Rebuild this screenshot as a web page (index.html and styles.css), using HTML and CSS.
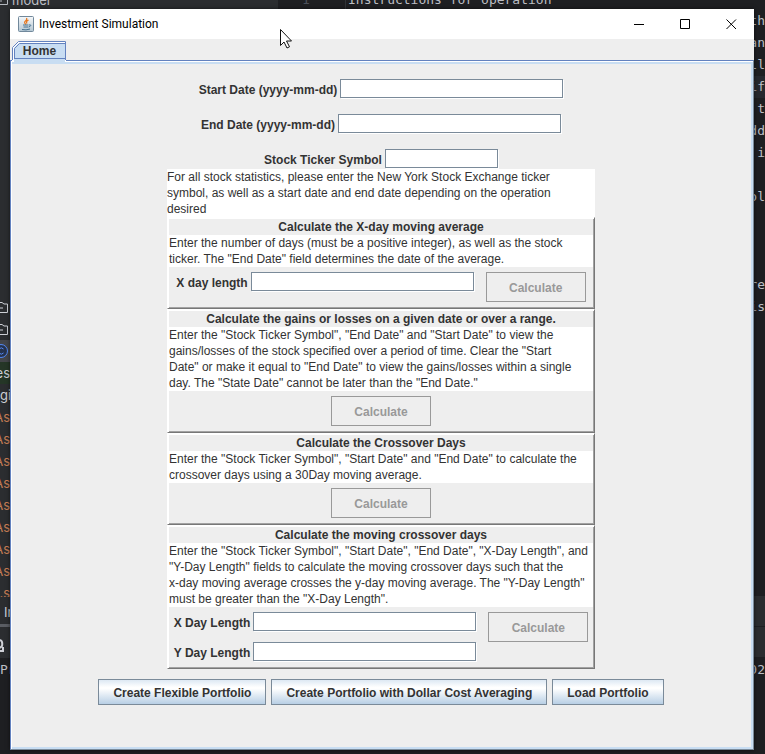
FILE: index.html
```html
<!DOCTYPE html>
<html lang="en">
<head>
<meta charset="utf-8">
<title>Investment Simulation</title>
<link rel="stylesheet" href="styles.css">
</head>
<body>
<div class="desktop">
  <div class="editor-top">
    <div class="tree-top">
      <svg width="9" height="9" viewBox="0 0 9 9"><path d="M0 4.500H7.500V-2M0 1h2" fill="none" stroke="#b4b8bf"/></svg>
      <span>model</span>
    </div>
    <div class="gutter">1</div>
    <div class="code">Instructions for operation</div>
  </div>

  <div class="tree">
    <div class="tree-rows">
      <div class="tree-row"><svg width="10" height="14" viewBox="0 0 10 14"><path d="M0 2.500h2l2 1.500h3.500v8.500H0M0 8h3" fill="none" stroke="#ced0d6"/></svg></div>
      <div class="tree-row"><svg width="10" height="14" viewBox="0 0 10 14"><path d="M0 2.500h2l2 1.500h3.500v8.500H0M0 8h3" fill="none" stroke="#ced0d6"/></svg></div>
      <div class="tree-row selected"><svg width="10" height="14" viewBox="0 0 10 14"><circle cx="1" cy="7" r="6.500" fill="#25324d" stroke="#548af7"/><path d="M3.500 5a3 3 0 1 0 0 4" fill="none" stroke="#548af7"/></svg></div>
      <div class="tree-row added">es</div>
      <div class="tree-row leading">git</div>
      <div class="tree-row ignored">As</div>
      <div class="tree-row ignored">As</div>
      <div class="tree-row ignored">As</div>
      <div class="tree-row ignored">As</div>
      <div class="tree-row ignored">As</div>
      <div class="tree-row ignored">As</div>
      <div class="tree-row ignored">As</div>
      <div class="tree-row ignored">As</div>
      <div class="tree-row ignored last">.s</div>
    </div>
    <div class="tool-tab">In</div>
    <div class="tool-icon"><svg width="10" height="16" viewBox="0 0 10 16"><path d="M0 2q3 1 2 6L0 10M0 13h3V9" fill="none" stroke="#ced0d6" stroke-width="2"/></svg></div>
    <div class="console">Pr</div>
  </div>

  <main class="window">
    <header class="titlebar">
      <svg class="app-icon" width="16" height="16" viewBox="0 0 16 16">
        <defs><linearGradient id="tile" x2="0" y2="1"><stop stop-color="#f6f8fa"/><stop offset="1" stop-color="#b3c6d3"/></linearGradient></defs>
        <rect x=".5" y=".5" width="15" height="15" rx="1" fill="url(#tile)" stroke="#71889b"/>
        <path d="M8.500 2q1 1.500-1 3t.5 3.500M10.500 4q-3 1.500-1.500 3.500" fill="none" stroke="#e8761c" stroke-width="1.200"/>
        <path d="M5 9h5.500M5.500 11h4.500M4 13.500q4 1 8-.5M11 9q3-.5 1 1.500l-1.500.5" fill="none" stroke="#45718f"/>
      </svg>
      <h1 class="title">Investment Simulation</h1>
      <button class="win-btn" aria-label="Minimize"><svg width="11" height="11" viewBox="0 0 11 11"><path d="M0 5.500h10" stroke="#000"/></svg></button>
      <button class="win-btn" aria-label="Maximize"><svg width="11" height="11" viewBox="0 0 11 11"><path d="M.5.5h9v9h-9z" fill="none" stroke="#000"/></svg></button>
      <button class="win-btn" aria-label="Close"><svg width="11" height="11" viewBox="0 0 11 11"><path d="M.5.500l9.500 9.500M10 .500l-9.500 9.500" stroke="#000"/></svg></button>
    </header>

    <nav class="tabs">
      <button class="tab">
        <svg class="tab-shape" width="54" height="21" viewBox="0 0 54 21" aria-hidden="true">
          <path d="M0 21V6.500L6.500 0H54v21z" fill="#fff"/>
          <path d="M2 21V7l5-5h46v19z" fill="#c8ddf2"/>
          <path d="M.5 19V6.500l6-6h47V19M2.500 18V7.500l5-5H53M2 17.500h51" fill="none" stroke="#6382bf"/>
        </svg>
        <span>Home</span>
      </button>
    </nav>

    <section class="pane">
      <div class="field-row"><label for="start">Start Date (yyyy-mm-dd)</label><input id="start" class="field" type="text"></div>
      <div class="field-row"><label for="end">End Date (yyyy-mm-dd)</label><input id="end" class="field" type="text"></div>
      <div class="field-row"><label for="ticker">Stock Ticker Symbol</label><input id="ticker" class="field short" type="text"></div>

      <div class="operations">
        <p class="note">For all stock statistics, please enter the New York Stock Exchange ticker<br>symbol, as well as a start date and end date depending on the operation<br>desired</p>

        <section class="panel">
          <h2>Calculate the X-day moving average</h2>
          <p class="note">Enter the number of days (must be a positive integer), as well as the stock<br>ticker. The "End Date" field determines the date of the average.</p>
          <div class="controls">
            <div class="inputs">
              <div class="pair"><label for="xday">X day length</label><input id="xday" class="field" type="text"></div>
            </div>
            <button class="calc" disabled>Calculate</button>
          </div>
        </section>

        <section class="panel">
          <h2>Calculate the gains or losses on a given date or over a range.</h2>
          <p class="note">Enter the "Stock Ticker Symbol", "End Date" and "Start Date" to view the<br>gains/losses of the stock specified over a period of time. Clear the "Start<br>Date" or make it equal to "End Date" to view the gains/losses within a single<br>day. The "State Date" cannot be later than the "End Date."</p>
          <div class="controls"><button class="calc" disabled>Calculate</button></div>
        </section>

        <section class="panel">
          <h2>Calculate the Crossover Days</h2>
          <p class="note">Enter the "Stock Ticker Symbol", "Start Date" and "End Date" to calculate the<br>crossover days using a 30Day moving average.</p>
          <div class="controls"><button class="calc" disabled>Calculate</button></div>
        </section>

        <section class="panel">
          <h2>Calculate the moving crossover days</h2>
          <p class="note">Enter the "Stock Ticker Symbol", "Start Date", "End Date", "X-Day Length", and<br>"Y-Day Length" fields to calculate the moving crossover days such that the<br>x-day moving average crosses the y-day moving average. The "Y-Day Length"<br>must be greater than the "X-Day Length".</p>
          <div class="controls">
            <div class="inputs">
              <div class="pair"><label for="xlen">X Day Length</label><input id="xlen" class="field" type="text"></div>
              <div class="pair"><label for="ylen">Y Day Length</label><input id="ylen" class="field" type="text"></div>
            </div>
            <button class="calc" disabled>Calculate</button>
          </div>
        </section>
      </div>

      <div class="actions">
        <button class="action">Create Flexible Portfolio</button>
        <button class="action">Create Portfolio with Dollar Cost Averaging</button>
        <button class="action">Load Portfolio</button>
      </div>
    </section>
  </main>

  <div class="editor-side">
    <div class="side-code">
      <div>th</div><div>an</div><div>ll</div><div class="current">if</div><div>&nbsp;t</div><div>dd</div><div>&nbsp;i</div><div>&nbsp;</div><div>ol</div><div>&nbsp;</div><div>&nbsp;</div><div>&nbsp;</div><div>re</div><div>is</div>
    </div>
    <div class="side-bar"></div>
    <div class="side-bar"></div>
    <div class="side-console">02</div>
  </div>

  <svg class="pointer" width="13" height="20" viewBox="0 0 13 20" aria-hidden="true"><path d="M.5.500v16l3.500-3.500 3 6 2.500-1.200-3-5.800h5z" fill="#fff" stroke="#111"/></svg>
</div>
</body>
</html>
```

FILE: styles.css
```css
* { box-sizing: border-box; }

body {
  margin: 0;
  background: #1e1f22;
  color: #333;
  font: 12px/16px "Liberation Sans", Arial, sans-serif;
}

h1, h2, p { margin: 0; font-size: 12px; }
button, input { font: inherit; color: inherit; border-radius: 0; }
svg { display: block; flex: none; }

.desktop {
  position: relative;
  display: grid;
  grid-template: 9px 1fr 4px / 10px 1fr 11px;
  min-height: 100vh;
}

/* Editor behind the window */
.editor-top {
  grid-column: 1 / -1;
  display: flex;
  overflow: hidden;
  color: #bcbec4;
  line-height: 22px;
}
.tree-top {
  display: flex;
  gap: 3px;
  width: 278px;
  background: #2b2d30;
  font: 13px/22px Inter, sans-serif;
}
.tree-top span { margin-top: -11px; }
.gutter {
  width: 68px;
  margin-top: -11px;
  padding-left: 24px;
  border-right: 1px solid #313438;
  color: #4b5059;
  font: 13px/22px "DejaVu Sans Mono", monospace;
}
.code {
  margin-top: -11px;
  padding-left: 2px;
  font: 13px/22px "DejaVu Sans Mono", monospace;
}

.tree {
  display: flex;
  flex-direction: column;
  overflow: hidden;
  background: #2b2d30;
  color: #ced0d6;
  font: 13px/22px Inter, sans-serif;
}
.tree-rows {
  height: 588px;
  padding-top: 287px;
  overflow: hidden;
}
.tree-row {
  display: flex;
  align-items: center;
  justify-content: flex-end;
  height: 22px;
}
.leading { justify-content: flex-start; }
.selected { background: #43454a; }
.added { background: #253627; }
.ignored { color: #c77d55; }
.last { height: 15px; align-items: flex-start; overflow: hidden; }
.tool-tab {
  height: 30px;
  padding: 4px 0 0 4px;
  border-bottom: 3px solid #5a5d63;
}
.tool-icon { height: 31px; padding-top: 11px; }
.console {
  flex: 1;
  background: #1e1f22;
  color: #bcbec4;
  font: 13px/24px "DejaVu Sans Mono", monospace;
}

.editor-side {
  display: flex;
  flex-direction: column;
  overflow: hidden;
  background: #1e1f22;
  color: #bcbec4;
  font: 13px/22px "DejaVu Sans Mono", monospace;
}
.side-code { height: 587px; padding-top: 1px; }
.side-code div, .side-console { display: flex; justify-content: flex-end; }
.side-code .current { background: #26282e; }
.side-bar {
  height: 31px;
  border-bottom: 1px solid #1e1f22;
  background: #2b2d30;
}
.side-console { line-height: 24px; }

/* Application window */
.window {
  z-index: 1;
  display: flex;
  flex-direction: column;
  background: #eee;
  box-shadow: 0 0 4px rgba(0, 0, 0, .6);
}
.titlebar {
  display: flex;
  align-items: center;
  height: 30px;
  padding-left: 8px;
  background: #fff;
  color: #000;
}
.app-icon { margin-right: 5px; }
.title {
  flex: 1;
  font: 12px/16px Roboto, sans-serif;
}
.win-btn {
  display: flex;
  justify-content: center;
  align-items: center;
  width: 46px;
  height: 30px;
  padding: 0;
  border: 0;
  background: none;
}

.tabs {
  display: flex;
  height: 21px;
  padding: 2px 0 0 2px;
}
.tab {
  display: grid;
  width: 54px;
  height: 21px;
  padding: 0;
  border: 0;
  background: none;
  font-weight: bold;
}
.tab-shape, .tab span { grid-area: 1 / 1; z-index: 1; }
.tab span { padding-left: 1px; line-height: 21px; }

.pane {
  flex: 1;
  padding: 15px 2px 40px 0;
  border: 1px solid #6382bf;
  border-right-color: #7a8a99;
  border-bottom-color: #7a8a99;
  box-shadow: inset 1px 1px #fff, inset -2px -2px #c8ddf2, inset 0 3px #c8ddf2;
}
.field-row {
  display: flex;
  justify-content: center;
  gap: 3px;
  height: 35px;
  padding-top: 3px;
}
.field-row:nth-child(3) { height: 23px; }
label { font-weight: bold; line-height: 22px; white-space: nowrap; }
.field {
  width: 223px;
  height: 19px;
  padding: 0 2px;
  border: 1px solid #7a8a99;
  background: #fff;
  box-shadow: 1px 1px #fff;
}
.short { width: 113px; }

.operations {
  width: 428px;
  max-width: 100%;
  margin: 0 auto;
}
.note { background: #fff; white-space: nowrap; }
.panel {
  border: 1px solid #fff;
  border-right-color: #777;
  border-bottom-color: #777;
  padding: 1px;
  box-shadow: inset 1px 1px #fff, inset -1px -1px #a2a2a2;
}
h2 { line-height: 16px; text-align: center; font-weight: bold; }
.controls {
  display: flex;
  justify-content: center;
  gap: 12px;
  padding: 5px 0;
}
.inputs { display: grid; gap: 11px; justify-items: center; }
.pair { display: flex; gap: 3px; height: 19px; }
.inputs:has(.pair + .pair) { padding-bottom: 1px; }

.calc {
  width: 100px;
  height: 30px;
  padding: 1px 0 0;
  border: 1px solid #999;
  background: #eee;
  color: #999;
  font-weight: bold;
}
.actions {
  display: flex;
  justify-content: center;
  gap: 5px;
  padding-top: 10px;
}
.action {
  height: 26px;
  padding: 1px 14px 0;
  border: 1px solid #7a8a99;
  background: linear-gradient(#dde8f3, #fff 30%, #fff 36%, #b8cfe5);
  font-weight: bold;
  white-space: nowrap;
}

.pointer { position: absolute; z-index: 2; left: 280px; top: 29px; }
```
